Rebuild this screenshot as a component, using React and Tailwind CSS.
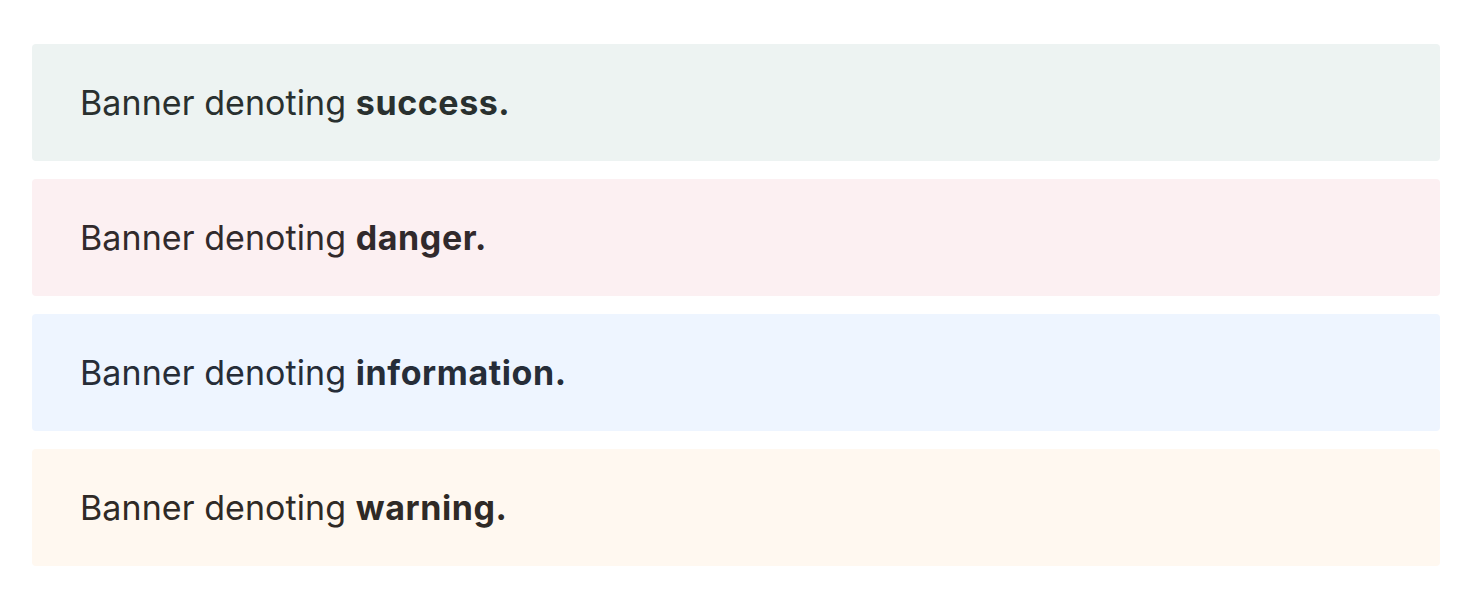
export default function App() {
  const items = [
    { word: "success.", bg: "bg-[#edf3f2]", fg: "text-[#29302f]" },
    { word: "danger.", bg: "bg-[#fcf0f2]", fg: "text-[#312a2c]" },
    { word: "information.", bg: "bg-[#eef5ff]", fg: "text-[#262d38]" },
    { word: "warning.", bg: "bg-[#fff8f0]", fg: "text-[#2f2a26]" },
  ];
  return (
    <div className="min-h-[608px] bg-white pt-[44px] px-[32px] pr-[38px] flex flex-col gap-[18px] font-['Inter',sans-serif]">
      {items.map((it) => (
        <div key={it.word} className={`h-[117px] rounded-[4px] ${it.bg} flex items-center pl-[48px]`}>
          <p className={`text-[34px] leading-none tracking-[0.002em] ${it.fg}`}>
            Banner denoting <strong className="font-bold tracking-[0.017em]">{it.word}</strong>
          </p>
        </div>
      ))}
    </div>
  );
}
